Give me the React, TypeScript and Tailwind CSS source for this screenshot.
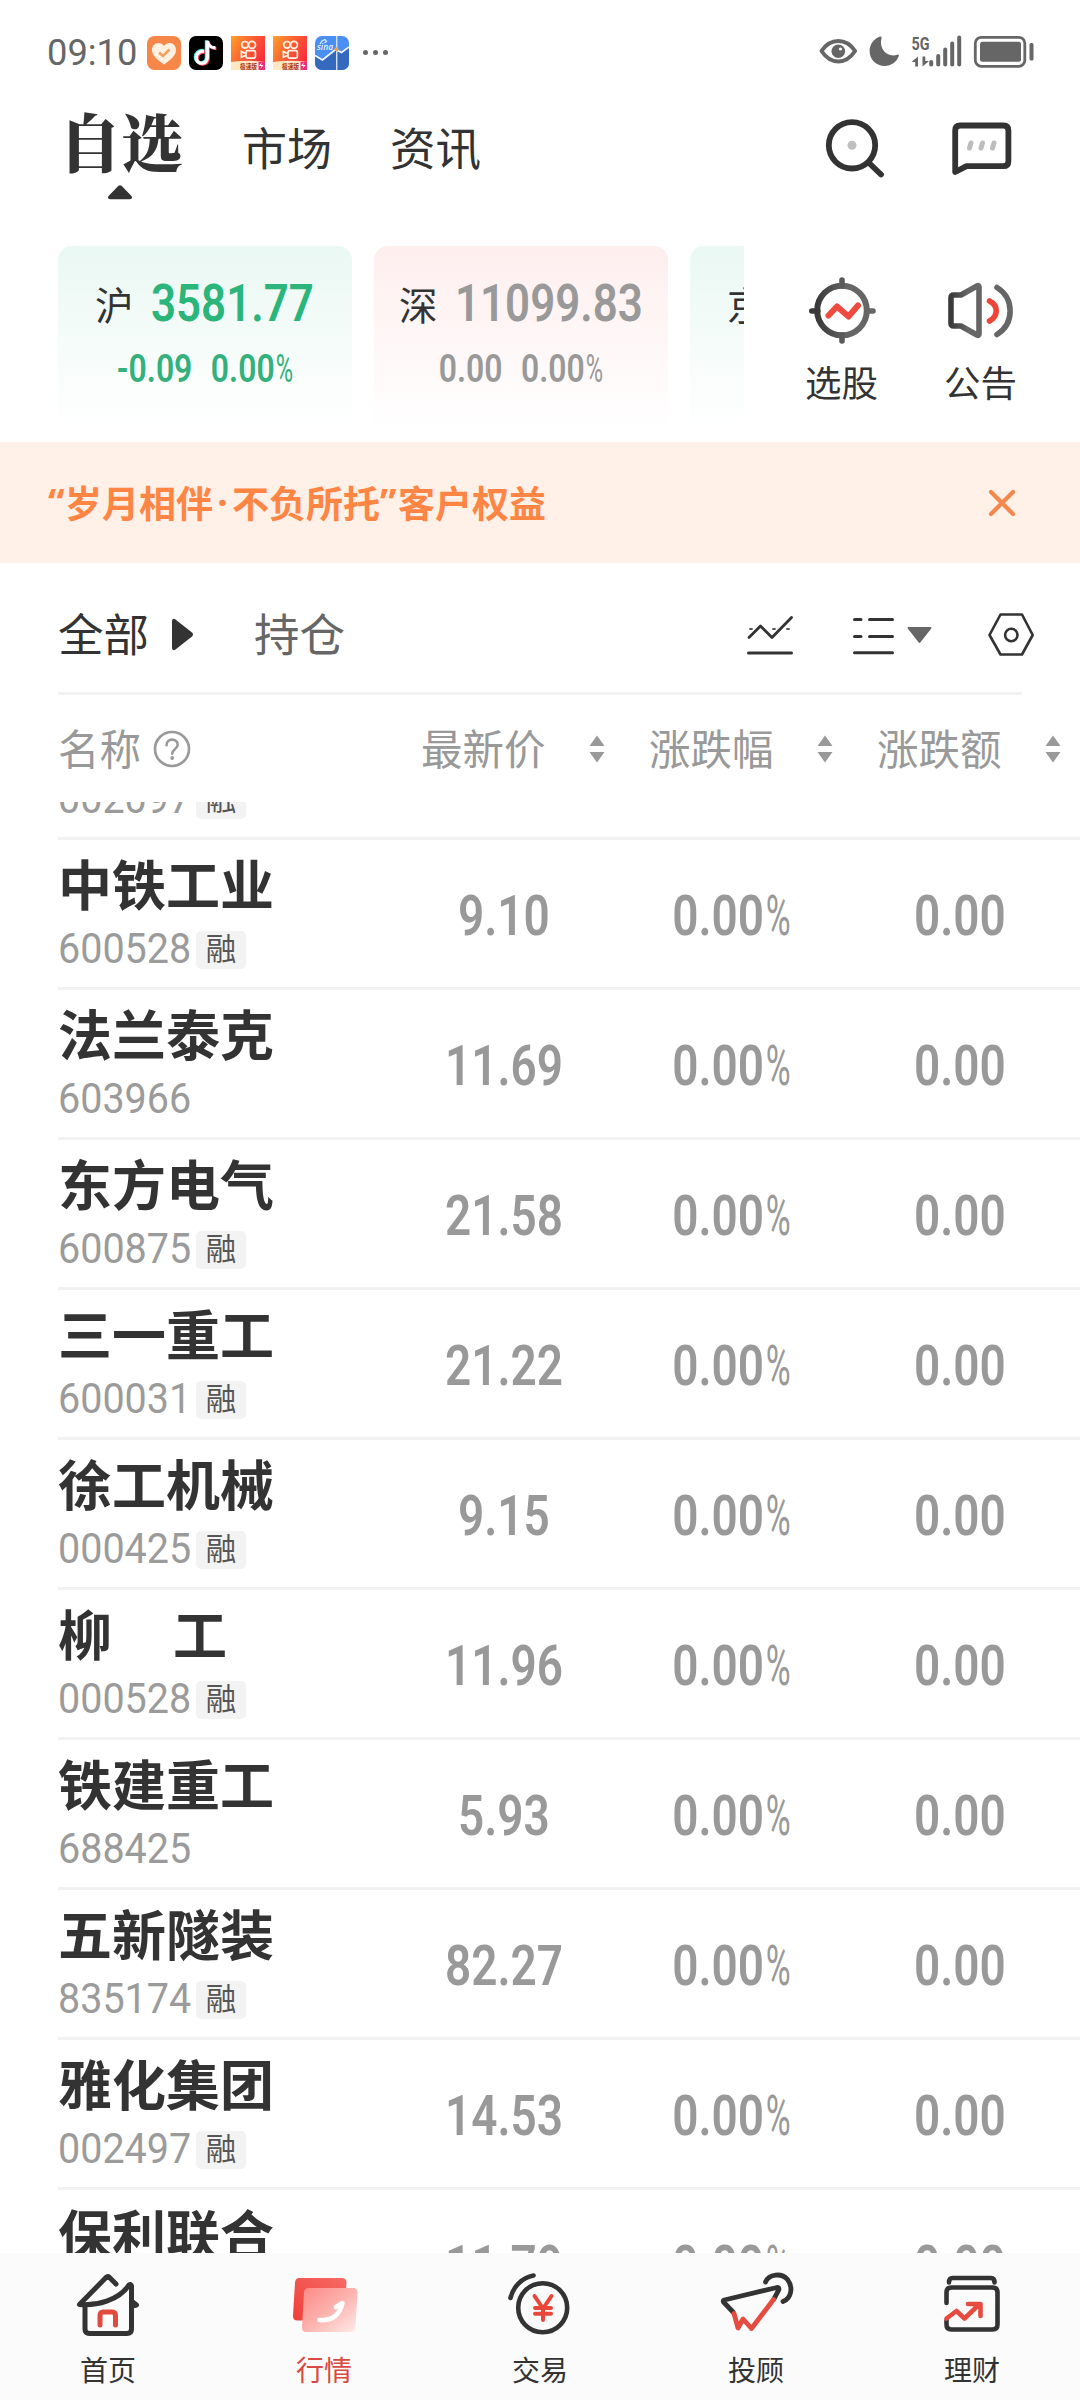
import React from "react";

const CJK = "font-['Noto_Sans_CJK_SC',sans-serif]";

type Stock = { name: string; code: string; margin: boolean; price: string };

const STOCKS: Stock[] = [
  { name: "中铁工业", code: "600528", margin: true, price: "9.10" },
  { name: "法兰泰克", code: "603966", margin: false, price: "11.69" },
  { name: "东方电气", code: "600875", margin: true, price: "21.58" },
  { name: "三一重工", code: "600031", margin: true, price: "21.22" },
  { name: "徐工机械", code: "000425", margin: true, price: "9.15" },
  { name: "柳 工", code: "000528", margin: true, price: "11.96" },
  { name: "铁建重工", code: "688425", margin: false, price: "5.93" },
  { name: "五新隧装", code: "835174", margin: true, price: "82.27" },
  { name: "雅化集团", code: "002497", margin: true, price: "14.53" },
  { name: "保利联合", code: "002037", margin: true, price: "11.79" },
];

/* ---------- status bar ---------- */

function KuaishouIcon() {
  return (
    <svg width="34" height="34" viewBox="0 0 34 34">
      <defs>
        <linearGradient id="ks" x1="0" y1="0" x2="1" y2="0.6">
          <stop offset="0" stopColor="#fda22b" />
          <stop offset="0.55" stopColor="#fb5a33" />
          <stop offset="1" stopColor="#fa2c3c" />
        </linearGradient>
      </defs>
      <rect width="34" height="34" fill="url(#ks)" />
      <g fill="none" stroke="#fff3e6" strokeWidth="1.7">
        <circle cx="14" cy="8.8" r="3.3" />
        <circle cx="21" cy="8.8" r="3.5" />
        <rect x="15" y="14.6" width="9.4" height="7.6" rx="1.6" />
        <path d="M15 17.5l-4.6-1.9v5.6l4.6-1.9" />
      </g>
      <path d="M0 26q17-2.500 34 0v8H0z" fill="#ffe9c4" />
      <text x="9" y="32.500" fontSize="6.500" fontWeight="700" fill="#a8341d" fontFamily="Noto Sans CJK SC" textLength="17" lengthAdjust="spacingAndGlyphs">极速版</text>
      <path d="M27.500 26H34v8h-6.500z" fill="#ec2d77" />
      <path d="M31 26l-3 4h2.500l-1 3 3-4H30z" fill="#fff" />
    </svg>
  );
}

function StatusBar() {
  return (
    <div className="flex h-[104px] items-center pl-[47px] pr-[46px] text-[#666]">
      <span className="w-[100px] origin-left scale-x-[0.98] pt-[1px] font-['Roboto',sans-serif] text-[37px] leading-[40px]">09:10</span>
      <div className="flex gap-2 pt-[2px]">
        <svg width="34" height="34" viewBox="0 0 34 34">
          <rect width="34" height="34" rx="7.500" fill="#f68748" />
          <path d="M17 28.500C9 23 5 19 5 14c0-4 2.800-7 6.300-7 2.400 0 4.400 1.300 5.700 3 1.300-1.700 3.300-3 5.700-3C26.200 7 29 10 29 14c0 5-4 9-12 14.500z" fill="#fff1e2" />
          <path d="M12 16.500l4 3.500 6.500-6.500" fill="none" stroke="#f2a05c" strokeWidth="2.600" />
        </svg>
        <svg width="34" height="34" viewBox="0 0 34 34">
          <rect width="34" height="34" rx="7" fill="#000" />
          <g fill="none" strokeWidth="3.400">
            <path d="M15.200 15.200c-5-.5-8 3-8 6.400 0 3 2.300 5.800 5.400 5.800 3.600 0 5.700-2.400 5.700-5.800V4.800" stroke="#3fe7e0" transform="translate(-.8 -.6)" />
            <path d="M15.200 15.200c-5-.5-8 3-8 6.400 0 3 2.300 5.800 5.400 5.800 3.600 0 5.700-2.400 5.700-5.800V4.800c.4 4 3.700 7 8.200 7" stroke="#f0365a" transform="translate(1 .8)" />
            <path d="M15.200 15.200c-5-.5-8 3-8 6.400 0 3 2.300 5.800 5.400 5.800 3.600 0 5.700-2.400 5.700-5.800V4.800c.4 4 3.700 7 8.200 7" stroke="#fff" />
          </g>
        </svg>
        <KuaishouIcon />
        <KuaishouIcon />
        <svg width="34" height="34" viewBox="0 0 34 34">
          <defs>
            <clipPath id="sinaClip"><rect width="34" height="34" rx="7" /></clipPath>
          </defs>
          <g clipPath="url(#sinaClip)">
            <rect width="34" height="34" fill="#4a8ff5" />
            <path d="M0 19.500l7.500 4.500L20.500 13.500l5 2.500L34 11v23H0z" fill="#3469bd" />
            <path d="M0 19.500l7.500 4.500L20.500 13.500l6 3L34 11" fill="none" stroke="#f2f7ff" strokeWidth="1.700" />
            <path d="M21.700 0v34" stroke="#cfe0f5" strokeWidth="1.400" />
            <circle cx="21.500" cy="13.300" r="2" fill="#f2a23c" />
          </g>
          <path d="M5 8l2-3 3-1.500 1.500 2-2 1.500" fill="none" stroke="#e8f2ff" strokeWidth="1.200" />
          <text x="2" y="13.500" fontSize="8.500" fontStyle="italic" fontWeight="600" fill="#e8f2ff" fontFamily="Open Sans">sina</text>
        </svg>
      </div>
      <div className="ml-[14px] flex gap-[5px]">
        <i className="size-[5px] rounded-full bg-[#666]" />
        <i className="size-[5px] rounded-full bg-[#666]" />
        <i className="size-[5px] rounded-full bg-[#666]" />
      </div>
      <svg className="ml-auto" width="216" height="40" viewBox="818 33 216 40" fill="none">
        <path d="M821.500 52c4-6 10-10 16.800-10s12.800 4 16.800 10c-4 6-10 10.500-16.800 10.500S825.500 58 821.500 52z" stroke="#666" strokeWidth="4" strokeLinejoin="round" />
        <circle cx="838.300" cy="52.300" r="6.800" fill="#666" />
        <circle cx="840.500" cy="50" r="1.600" fill="#fff" />
        <path d="M880 37.500c-6 2-10.400 7.800-10.400 14.500 0 8.500 6.700 15 15 15 6.700 0 12.200-4.200 14.200-10 .4-1.300-.5-1.800-1.500-1.300-9.500 3.500-18.800-5.500-15.800-16.700.3-1.300-.2-1.900-1.500-1.500z" fill="#666" />
        <text x="911.500" y="50.500" fontSize="19" fontWeight="700" fill="#666" fontFamily="Roboto" textLength="18" lengthAdjust="spacingAndGlyphs">5G</text>
        <path d="M911.500 62.500l6.500-5.500v10h-2.800v-4.500zM929 61.500l-6.500 5.500V57h2.800v4.500z" fill="#666" transform="translate(0 .5)" />
        <g stroke="#666" strokeWidth="4" strokeLinecap="round">
          <path d="M931.200 63v2.500M938.200 57v8.500M945.200 50.500v15M952.200 44.500v21M959.200 38.500v27" />
        </g>
        <rect x="975.300" y="38.300" width="49.500" height="29" rx="6" stroke="#666" strokeWidth="2.800" />
        <rect x="980" y="42.700" width="41" height="20" rx="2.500" fill="#666" />
        <rect x="1029.500" y="44" width="4" height="17.500" rx="1.500" fill="#666" />
      </svg>
    </div>
  );
}

/* ---------- header ---------- */

function Header() {
  return (
    <div className={`flex h-[142px] items-start pl-[60px] text-[#333] ${CJK}`}>
      <div className="flex w-[120px] flex-col items-center">
        <span className="-mr-[2px] whitespace-nowrap font-['Noto_Serif_CJK_SC','Noto_Sans_CJK_SC',serif] text-[62px] font-black leading-[64px] pt-[4px] scale-y-[1.02]">自选</span>
        <svg className="mt-[13px]" width="24" height="15" viewBox="0 0 24 15">
          <path d="M10.500.8q1.500-1.300 3 0L23.500 11q1.500 3-1.500 3.300H2Q-1 14 .5 11z" fill="#333" />
        </svg>
      </div>
      <span className="ml-[62px] mt-[20px] text-[45px] leading-[45px]">市场</span>
      <span className="ml-[58px] mt-[20px] text-[45.500px] leading-[45px]">资讯</span>
      <svg className="ml-auto mr-[66px] mt-[14px]" width="62" height="62" viewBox="824 118 62 62" fill="none">
        <circle cx="852" cy="145.300" r="23.200" stroke="#333" strokeWidth="5.800" />
        <path d="M869 163l12 11.500" stroke="#333" strokeWidth="5.800" strokeLinecap="round" />
        <circle cx="852" cy="145.300" r="4.500" fill="#c0c0c0" />
      </svg>
      <svg className="mr-[68px] mt-[14px]" width="60" height="62" viewBox="952 118 60 62" fill="none">
        <path d="M955.200 172V130.500q0-5 5-5h43.200q5 0 5 5v30.700q0 5-5 5H966.500z" stroke="#333" strokeWidth="5.800" strokeLinejoin="round" />
        <path d="M971 143l-1.500 5M982.500 143l-1.500 5M994 143l-1.500 5" stroke="#bdbdbd" strokeWidth="5" strokeLinecap="round" />
      </svg>
    </div>
  );
}

function IndexCard({ label, value, change, tone, ml }: { label: string; value: string; change: string; tone: "up" | "down"; ml: string }) {
  const down = tone === "down";
  return (
    <div className={`h-[184px] w-[294px] shrink-0 rounded-t-[14px] bg-linear-to-b to-white ${down ? "from-[#eaf8f3]" : "from-[#feeeee]"}`}>
      <div className={`flex items-center pt-[32px] ${ml}`}>
        <span className={`text-[38.500px] leading-[50px] text-[#333] ${CJK}`}>{label}</span>
        <span className={`ml-[17px] origin-left scale-x-[0.835] font-['Roboto',sans-serif] text-[52.500px] font-semibold leading-[50px] ${down ? "text-[#2bb57a]" : "text-[#999]"}`}>{value}</span>
      </div>
      <div className={`mt-[18px] flex justify-center font-['Roboto',sans-serif] text-[38px] font-semibold leading-[46px] ${down ? "text-[#33b07c]" : "text-[#999]"}`}>
        <span className="flex scale-x-[0.84] gap-[22px]">
          <span>{change}</span>
          <span className="flex">0.00<span className="ml-[1px] w-[22px] origin-left scale-x-[0.74] font-normal">%</span></span>
        </span>
      </div>
    </div>
  );
}

function IndexRow() {
  return (
    <div className="flex h-[196px]">
      <div className="ml-[58px] flex w-[686px] gap-[22px] overflow-hidden">
        <IndexCard label="沪" value="3581.77" change="-0.09" tone="down" ml="ml-[37px]" />
        <IndexCard label="深" value="11099.83" change="0.00" tone="up" ml="ml-[25px]" />
        <IndexCard label="京" value="1430.27" change="-2.18" tone="down" ml="ml-[37px]" />
      </div>
      <div className={`flex grow pl-[28px] pt-[27px] text-[36.500px] leading-[36px] text-[#333] ${CJK}`}>
        <div className="flex w-[139px] flex-col items-center">
          <svg width="72" height="76" viewBox="806 273 72 76" fill="none">
            <defs>
              <linearGradient id="gray" x1="0" y1="0" x2="1" y2="0">
                <stop offset="0" stopColor="#3a3a3a" />
                <stop offset="0.6" stopColor="#666" />
              </linearGradient>
            </defs>
            <circle cx="842" cy="310.500" r="24.800" stroke="url(#gray)" strokeWidth="6" />
            <path d="M842 280v6M842 335v6" stroke="#5a5a5a" strokeWidth="5.600" strokeLinecap="round" />
            <path d="M811.800 311h6" stroke="#3a3a3a" strokeWidth="5.600" strokeLinecap="round" />
            <path d="M867 311h6" stroke="#666" strokeWidth="5.600" strokeLinecap="round" />
            <path d="M828.500 315.500l8.500-9 11.500 10 9.500-11" stroke="#ee4a3e" strokeWidth="6" strokeLinecap="round" strokeLinejoin="round" />
          </svg>
          <span className="mt-[15px]">选股</span>
        </div>
        <div className="flex w-[139px] flex-col items-center">
          <svg width="72" height="76" viewBox="945 273 72 76" fill="none">
            <defs>
              <linearGradient id="gray2" x1="0" y1="0" x2="1" y2="0">
                <stop offset="0" stopColor="#3a3a3a" />
                <stop offset="0.6" stopColor="#666" />
              </linearGradient>
            </defs>
            <path d="M951 298q0-3 3-3h7l16-9q2-1 2 1v47q0 2-2 1l-16-9h-7q-3 0-3-3z" stroke="url(#gray2)" strokeWidth="5.600" strokeLinejoin="round" />
            <path d="M989.500 301c9 4.500 9 15 0 20" stroke="#ee4438" strokeWidth="5.600" strokeLinecap="round" />
            <path d="M997 287.500c17.500 11 17.500 36 0 47" stroke="#666" strokeWidth="5.600" strokeLinecap="round" />
          </svg>
          <span className="mt-[15px]">公告</span>
        </div>
      </div>
    </div>
  );
}

function Notice() {
  return (
    <div className={`flex h-[121px] items-center justify-between bg-[#fff0e8] pl-[48px] pr-[64px] text-[37px] font-bold text-[#fe8544] ${CJK}`}>
      <span className="-mt-[2px] flex leading-[46px]">
        <span className="w-[17px] font-['Noto_Sans',sans-serif]">“</span>岁月相伴<span className="w-[19px] text-center font-['Noto_Sans',sans-serif]">·</span>不负所托<span className="w-[18px] font-['Noto_Sans',sans-serif]">”</span>客户权益
      </span>
      <svg width="28" height="28" viewBox="0 0 28 28" fill="none" stroke="#f5864c" strokeWidth="4.200" strokeLinecap="round">
        <path d="M3 3l22 22M25 3L3 25" />
      </svg>
    </div>
  );
}

function FilterBar() {
  return (
    <div className={`flex h-[129px] items-center pl-[58px] pr-[44px] text-[45.500px] leading-[45px] text-[#333] ${CJK}`}>
      <span className="pt-[9px]">全部</span>
      <svg className="ml-[22px] mt-[14px]" width="24" height="33" viewBox="0 0 24 33">
        <path d="M1 3q.5-3.500 3.500-1.500l16.500 13q2 2 0 4l-16.500 13Q1.500 33.500 1 30z" fill="#333" />
      </svg>
      <span className="ml-[59px] pt-[9px] text-[#666]">持仓</span>
      <svg className="ml-auto mt-[14px]" width="292" height="50" viewBox="744 610 292 50" fill="none" stroke="#333" strokeLinecap="round" strokeLinejoin="round">
        <path d="M749 637.500l11.500-11.500 11.500 11.500 19.500-20" strokeWidth="2.800" />
        <path d="M750 629h2M773 629h2M787 629h2" strokeWidth="1.800" stroke="#555" />
        <path d="M748.500 653h43" strokeWidth="3" />
        <path d="M854.500 619.500h6.500M869.500 619.500h23M854.500 636.500h6.500M869.500 636.500h23M854.500 652.700h38" strokeWidth="3" />
        <path d="M908.500 628h22l-11 14z" fill="#666" stroke="#666" strokeWidth="2" />
        <path d="M1000.500 614.500h21.500l10.700 20.500-10.700 19.500h-21.500L989.500 635z" strokeWidth="2.600" />
        <circle cx="1011.300" cy="635" r="6.200" strokeWidth="2.600" />
      </svg>
    </div>
  );
}

/* ---------- table ---------- */

function SortHeader({ label }: { label: string }) {
  return (
    <div className="flex w-[228px] shrink-0 items-center">
      <span className="-mt-[2px] w-[168px]">{label}</span>
      <svg width="16" height="28" viewBox="0 0 16 28" fill="#999">
        <path d="M8 .5l7.500 10.500H.5zM.5 17h15L8 27.500z" />
      </svg>
    </div>
  );
}

function TableHeader() {
  return (
    <div className={`flex h-[107px] items-center overflow-hidden pl-[58px] text-[41.500px] leading-[41px] text-[#999] ${CJK}`}>
      <div className="flex h-[106px] w-[363px] shrink-0 items-center">
        <span className="-mt-[2px]">名称</span>
        <svg className="ml-[12px]" width="38" height="38" viewBox="0 0 38 38" fill="none" stroke="#999" strokeWidth="2.600">
          <circle cx="19" cy="19" r="17" />
          <path d="M13.500 15.200c0-3.500 2.400-5.600 5.600-5.600s5.600 2 5.600 5.100c0 4.300-5.500 4.300-5.500 9.100" strokeLinecap="round" />
          <circle cx="19.200" cy="28" r="1.900" fill="#999" stroke="none" />
        </svg>
      </div>
      <SortHeader label="最新价" />
      <SortHeader label="涨跌幅" />
      <SortHeader label="涨跌额" />
    </div>
  );
}

function Code({ code, margin }: { code: string; margin: boolean }) {
  return (
    <div className="flex h-[38px] items-start">
      <span className="w-[138px] origin-left scale-x-[0.94] font-['Roboto',sans-serif] text-[42px] font-normal leading-[36px] text-[#9b9b9b]">{code}</span>
      {margin && <span className={`flex h-[38px] w-[50px] items-center justify-center rounded-[5px] bg-[#f3f3f3] text-[30.500px] leading-[34px] pb-[6px] text-[#555] ${CJK}`}>融</span>}
    </div>
  );
}

function Cell({ value, percent }: { value: string; percent?: boolean }) {
  return (
    <div className="flex w-[228px] shrink-0 justify-center font-['Roboto',sans-serif] text-[56px] font-semibold leading-[56px] text-[#999]">
      <span className="flex scale-x-[0.82]">
        {value}
        {percent && <span className="ml-[2px] w-[33px] origin-left scale-x-[0.74] font-normal">%</span>}
      </span>
    </div>
  );
}

function StockRow({ s }: { s: Stock }) {
  return (
    <div className="ml-[58px] flex h-[150px] shrink-0 overflow-hidden border-b-[3px] border-[#f2f2f2]">
      <div className="w-[332px] shrink-0 pt-[16px]">
        <div className={`mb-[21px] flex h-[54px] text-[54px] font-bold leading-[54px] text-[#333] ${CJK} ${s.name.includes(" ") ? "gap-[61px]" : ""}`}>
          {s.name.split(" ").map((p) => <span key={p}>{p}</span>)}
        </div>
        <Code code={s.code} margin={s.margin} />
      </div>
      <div className="flex pt-[48px]">
        <Cell value={s.price} />
        <Cell value="0.00" percent />
        <Cell value="0.00" />
      </div>
    </div>
  );
}

/* ---------- bottom navigation ---------- */

const NAV = [
  {
    label: "首页",
    icon: (
      <svg width="72" height="68" viewBox="72 2271 72 68" fill="none" stroke="#333" strokeWidth="5" strokeLinecap="round" strokeLinejoin="round">
        <path d="M116 2284l-7-7q-1-1-2.500 0L79.500 2304.500c17 1.500 39-4 49.500-19.500q2-1.500 2.500 1v43q0 4.500-4.500 4.500H89.500q-4.500 0-4.500-4.500v-23M132 2301.500l4.500 3.500-4 1" />
        <path d="M100 2325v-9.500q0-3.500 3.500-3.500h8.500q3.500 0 3.500 3.500v9.500" stroke="#e24a3f" />
      </svg>
    ),
  },
  {
    label: "行情",
    active: true,
    icon: (
      <svg width="72" height="68" viewBox="288 2271 72 68" fill="none">
        <defs>
          <linearGradient id="q1" x1="0" y1="1" x2="1" y2="0">
            <stop offset="0" stopColor="#ef3f38" />
            <stop offset="1" stopColor="#f76a66" />
          </linearGradient>
          <linearGradient id="q2" x1="0" y1="0" x2="1" y2="1">
            <stop offset="0" stopColor="#fc8a86" />
            <stop offset="0.500" stopColor="#fcb2ae" />
            <stop offset="1" stopColor="#feeceb" />
          </linearGradient>
        </defs>
        <path d="M299 2278h43q4.500 0 4.500 4.500l-2.500 34q-.5 4-4.500 4h-42q-4.500 0-4.500-4.500l2-33.500q.5-4.500 4-4.500z" fill="url(#q1)" />
        <path d="M308 2288h45q4.500 0 4.500 4.500l-2 35q-.5 4.500-5 4.500h-44.500q-4 0-4-4.500l2-35q.5-4.500 4-4.500z" fill="url(#q2)" />
        <path d="M319.500 2320c12 1 20-4 23-17l-6.500 4" stroke="#fff" strokeWidth="4.600" strokeLinecap="round" strokeLinejoin="round" />
      </svg>
    ),
  },
  {
    label: "交易",
    icon: (
      <svg width="72" height="68" viewBox="504 2271 72 68" fill="none" stroke="#333" strokeWidth="4.600" strokeLinecap="round">
        <circle cx="542.700" cy="2307.700" r="24.500" />
        <path d="M510.500 2298c2.500-11 11.500-20.500 23-22.500" />
        <path d="M534.500 2296l8.500 12.500 8.500-12.500M543 2308.500V2320M535 2308h16M535 2313.800h16" stroke="#ea473b" strokeWidth="4" />
      </svg>
    ),
  },
  {
    label: "投顾",
    icon: (
      <svg width="80" height="68" viewBox="716 2271 80 68" fill="none" strokeWidth="4.800" strokeLinecap="round" strokeLinejoin="round">
        <path d="M733 2312l-9.500-10q-.8-1.500.8-2L777 2287.500q2-.2 2 1.800l-5 9.500" stroke="#333" />
        <path d="M773.500 2299.500L751.500 2328.500 743 2319 738 2328 734 2313.500" stroke="#e64b40" />
        <path d="M765.500 2282c3.500-8 16-9.500 22-2.500 5.500 7 4.500 18.500-4.500 22" stroke="#333" />
      </svg>
    ),
  },
  {
    label: "理财",
    icon: (
      <svg width="72" height="68" viewBox="936 2271 72 68" fill="none" stroke="#333" strokeWidth="4.600" strokeLinecap="round" strokeLinejoin="round">
        <path d="M949 2282.500q0-4.500 3.500-4.500h38.500q3.500 0 3.500 4.500" />
        <path d="M946.500 2303v-10.500q0-5 5-5h41q5 0 5 5v32q0 5-5 5h-41q-5 0-5-5v-4" />
        <path d="M946.500 2318.500l10-7.500 8 7.500 14-13.500M968 2304h12.500v12" stroke="#e64b40" />
      </svg>
    ),
  },
];

function BottomNav() {
  return (
    <nav className="flex h-[147px] shrink-0 bg-[#fbfbfb]">
      {NAV.map((n) => (
        <div key={n.label} className="flex w-[216px] flex-col items-center pt-[18px]">
          {n.icon}
          <span className={`mt-[16px] text-[28px] leading-[28px] ${CJK} ${n.active ? "text-[#d94a41]" : "text-[#333]"}`}>{n.label}</span>
        </div>
      ))}
    </nav>
  );
}

export default function App() {
  return (
    <div className="flex h-[2400px] w-[1080px] flex-col overflow-hidden bg-white">
      <StatusBar />
      <Header />
      <IndexRow />
      <Notice />
      <FilterBar />
      <div className="ml-[58px] h-[3px] w-[964px] bg-[#f2f2f2]" />
      <TableHeader />
      <div className="flex min-h-0 flex-1 flex-col overflow-hidden">
        <div className="ml-[58px] flex h-[38px] shrink-0 flex-col justify-end overflow-hidden border-b-[3px] border-[#f2f2f2] pb-[18px]">
          <Code code="002097" margin />
        </div>
        {STOCKS.map((s) => <StockRow key={s.code} s={s} />)}
      </div>
      <BottomNav />
    </div>
  );
}
